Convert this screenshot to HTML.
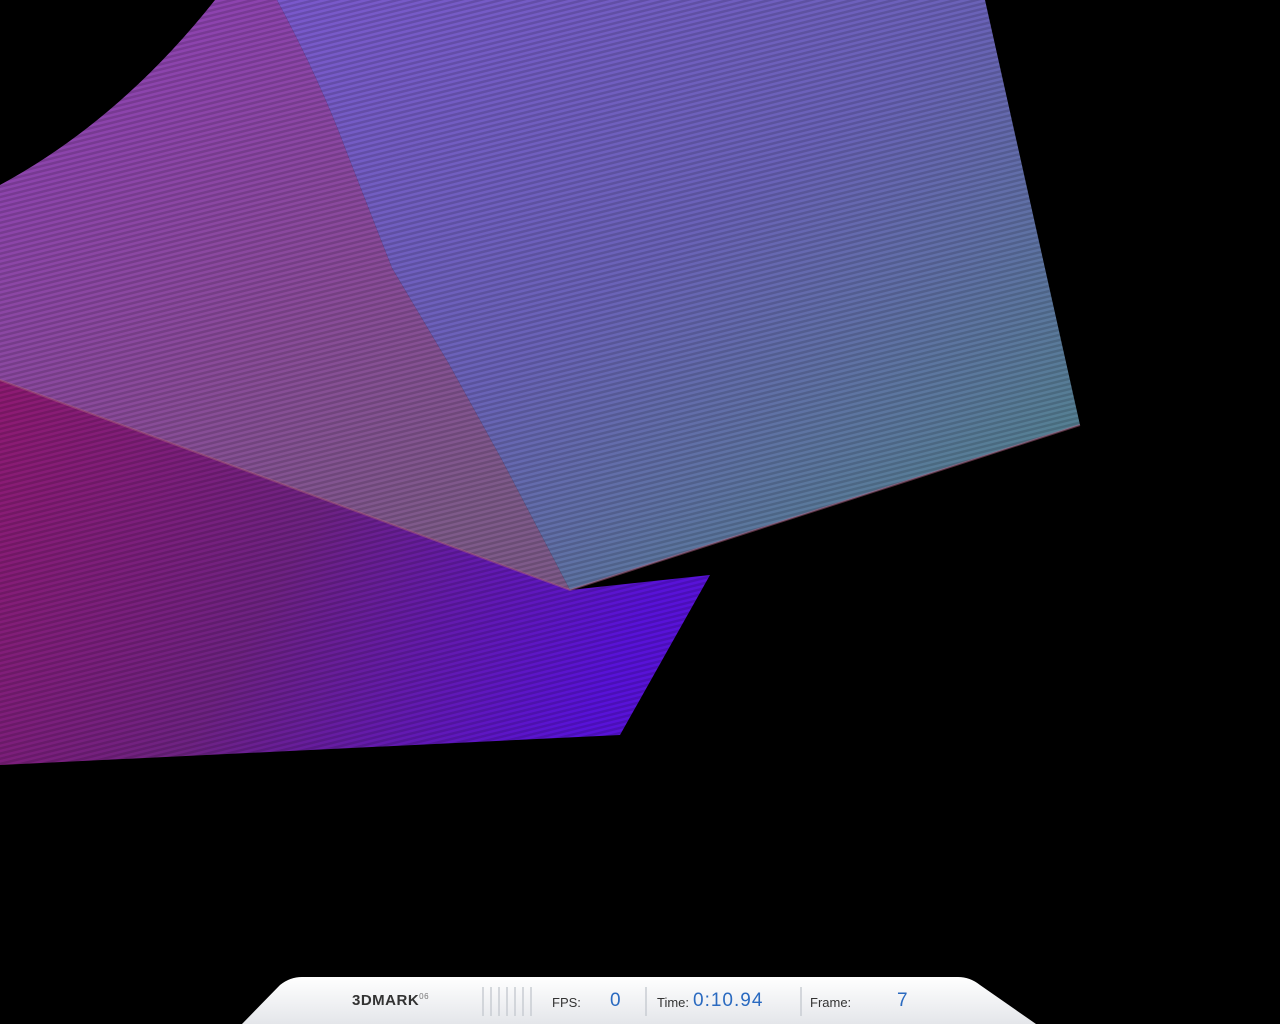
<!DOCTYPE html>
<html><head><style>
html,body{margin:0;padding:0;background:#000;width:1280px;height:1024px;overflow:hidden}
svg{position:absolute;left:0;top:0}
.t{position:absolute;font-family:"Liberation Sans",sans-serif;}
</style></head><body>
<svg width="1280" height="1024" viewBox="0 0 1280 1024">
<defs>
<linearGradient id="g1" x1="0" y1="0" x2="1" y2="1">
<stop offset="0" stop-color="#7a58cc"/><stop offset="0.45" stop-color="#6a62b8"/><stop offset="1" stop-color="#4e8a86"/>
</linearGradient>
<linearGradient id="g2" x1="0" y1="0" x2="0.6" y2="1">
<stop offset="0" stop-color="#8e40b8"/><stop offset="0.6" stop-color="#8a4a9a"/><stop offset="1" stop-color="#7e5a8a"/>
</linearGradient>
<linearGradient id="g3" x1="0" y1="0" x2="1" y2="0.3">
<stop offset="0" stop-color="#8e1a72"/><stop offset="0.5" stop-color="#6e2282"/><stop offset="1" stop-color="#5812d8"/>
</linearGradient>
<pattern id="st" width="5" height="5" patternUnits="userSpaceOnUse" patternTransform="rotate(-14)">
<rect width="5" height="2.5" fill="#000" opacity="0.15"/>
</pattern>
</defs>
<path d="M0,185 Q120,120 215,0 L277,0 Q320,80 347,153 L392,268 L449,364 L502,460 L570,590 L0,380 Z" fill="url(#g2)"/>
<path d="M277,0 L985,0 L1080,425 L570,590 L502,460 L449,364 L392,268 L347,153 Q320,80 277,0 Z" fill="url(#g1)"/>
<path d="M0,380 L570,590 L710,575 L620,735 L0,765 Z" fill="url(#g3)"/>
<path d="M0,0 L1280,0 L1280,770 L0,770 Z" fill="url(#st)"/>
<path d="M0,380 L570,590 L1080,425" stroke="#b06080" stroke-width="2" fill="none" opacity="0.5"/>
<defs><linearGradient id="bar" x1="0" y1="0" x2="0" y2="1"><stop offset="0" stop-color="#fff"/><stop offset="1" stop-color="#e4e6ea"/></linearGradient></defs>
<path d="M242,1024 L280,985 Q290,977 302,977 L958,977 Q970,977 980,985 L1036,1024 Z" fill="url(#bar)"/>
<g stroke="#c8ccd2" stroke-width="1.5">
<line x1="483" y1="987" x2="483" y2="1016"/><line x1="491" y1="987" x2="491" y2="1016"/><line x1="499" y1="987" x2="499" y2="1016"/><line x1="507" y1="987" x2="507" y2="1016"/><line x1="515" y1="987" x2="515" y2="1016"/><line x1="523" y1="987" x2="523" y2="1016"/><line x1="531" y1="987" x2="531" y2="1016"/>
<line x1="646" y1="987" x2="646" y2="1016"/><line x1="801" y1="987" x2="801" y2="1016"/>
</g>
</svg>
<div class="t" style="left:352px;top:992px;font-size:15px;font-weight:bold;color:#333;letter-spacing:0.5px">3DMARK<sup style="font-size:8px;font-weight:normal;color:#777">06</sup></div>
<div class="t" style="left:552px;top:995px;font-size:13px;color:#333">FPS:</div>
<div class="t" style="left:610px;top:990px;font-size:19px;color:#2a6ac0">0</div>
<div class="t" style="left:657px;top:995px;font-size:13px;color:#333">Time:</div>
<div class="t" style="left:693px;top:990px;font-size:19px;color:#2a6ac0;letter-spacing:1px">0:10.94</div>
<div class="t" style="left:810px;top:995px;font-size:13px;color:#333">Frame:</div>
<div class="t" style="left:897px;top:990px;font-size:19px;color:#2a6ac0">7</div>
</body></html>
